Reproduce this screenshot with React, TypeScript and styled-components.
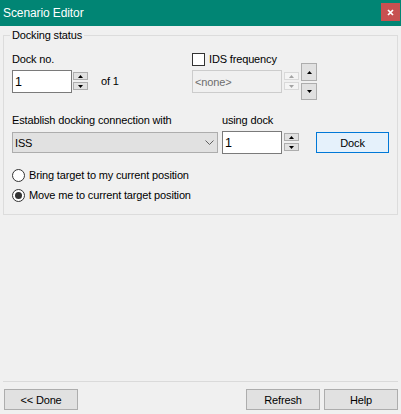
import React from "react";
import styled, { createGlobalStyle } from "styled-components";

const GlobalStyle = createGlobalStyle`
  html, body {
    margin: 0;
    padding: 0;
    background: #f0f0f0;
  }
  body {
    font-family: "Liberation Sans", Arial, sans-serif;
    font-size: 11px;
    letter-spacing: -0.15px;
    color: #000000;
  }
  * {
    box-sizing: border-box;
  }
`;

const Arrow = ({ down, color = "#000000" }: { down?: boolean; color?: string }) => (
  <svg width="5" height="3" viewBox="0 0 5 3">
    {down ? (
      <polygon points="0,0 5,0 2.5,3" fill={color} />
    ) : (
      <polygon points="0,3 5,3 2.5,0" fill={color} />
    )}
  </svg>
);

const Spinner = ({ disabled }: { disabled?: boolean }) => {
  const c = disabled ? "#a3a3a3" : "#000000";
  return (
    <Spin>
      <SpinButton $disabled={disabled}>
        <Arrow color={c} />
      </SpinButton>
      <SpinButton $disabled={disabled}>
        <Arrow down color={c} />
      </SpinButton>
    </Spin>
  );
};

const App = () => {
  return (
    <Window>
      <GlobalStyle />
      <TitleBar>
        <Caption>Scenario Editor</Caption>
        <CloseBox>
          <svg width="7" height="7" viewBox="0 0 7 7">
            <path d="M1 1 L6 6 M6 1 L1 6" stroke="#ffffff" strokeWidth="1.7" />
          </svg>
        </CloseBox>
      </TitleBar>

      <Body>
        <GroupBox>
          <GroupTitle>Docking status</GroupTitle>

          <Row>
            <Field $width={180}>
              <Label>Dock no.</Label>
              <Controls $gap={1}>
                <EditBox $width={60} readOnly defaultValue="1" />
                <Spinner />
                <Note>of 1</Note>
              </Controls>
            </Field>
            <Field>
              <CheckLine>
                <CheckBox />
                <span>IDS frequency</span>
              </CheckLine>
              <Controls $gap={2}>
                <EditBox $width={90} $disabled readOnly defaultValue="<none>" />
                <Spinner disabled />
              </Controls>
            </Field>
            <BigSpin>
              <BigSpinButton $height={18}>
                <Arrow />
              </BigSpinButton>
              <BigSpinButton $height={17}>
                <Arrow down />
              </BigSpinButton>
            </BigSpin>
          </Row>

          <Row $top={13}>
            <Field $width={210}>
              <Label>Establish docking connection with</Label>
              <Combo>
                <span>ISS</span>
                <svg width="9" height="5" viewBox="0 0 9 5">
                  <path d="M0.5 0.5 L4.5 4.5 L8.5 0.5" stroke="#606060" fill="none" strokeWidth="1" />
                </svg>
              </Combo>
            </Field>
            <Field>
              <Label>using dock</Label>
              <Controls $gap={2}>
                <EditBox $width={60} readOnly defaultValue="1" />
                <Spinner />
              </Controls>
            </Field>
            <DockButton>Dock</DockButton>
          </Row>

          <Radios>
            <RadioLine>
              <Radio />
              <span>Bring target to my current position</span>
            </RadioLine>
            <RadioLine>
              <Radio $checked />
              <span>Move me to current target position</span>
            </RadioLine>
          </Radios>
        </GroupBox>
      </Body>

      <Footer>
        <Separator />
        <ButtonBar>
          <PushButton>&lt;&lt; Done</PushButton>
          <Spacer />
          <PushButton>Refresh</PushButton>
          <PushButton>Help</PushButton>
        </ButtonBar>
      </Footer>
    </Window>
  );
};

export default App;

const Window = styled.div`
  width: 401px;
  height: 414px;
  display: flex;
  flex-direction: column;
  background: #f0f0f0;
  overflow: hidden;
`;

const TitleBar = styled.div`
  height: 26px;
  flex-shrink: 0;
  background: #018574;
  color: #ffffff;
  display: flex;
  justify-content: space-between;
  align-items: flex-start;
  padding-left: 3px;
`;

const Caption = styled.div`
  font-size: 12px;
  line-height: 26px;
  letter-spacing: -0.1px;
`;

const CloseBox = styled.div`
  width: 19px;
  height: 18px;
  margin-top: 3px;
  margin-right: 1px;
  background: #c75050;
  display: flex;
  align-items: center;
  justify-content: center;
`;

const Body = styled.div`
  padding: 2px 3px 0 3px;
`;

const GroupBox = styled.fieldset`
  margin: 0;
  min-width: 0;
  border: 1px solid #dcdcdc;
  padding: 10px 8px 9px 8px;
`;

const GroupTitle = styled.legend`
  padding: 0 2px;
  margin-left: -2px;
  line-height: 14px;
  font-size: 11px;
`;

const Row = styled.div<{ $top?: number }>`
  display: flex;
  align-items: flex-start;
  margin-top: ${(p) => p.$top ?? 0}px;
`;

const Field = styled.div<{ $width?: number }>`
  display: flex;
  flex-direction: column;
  gap: 4px;
  width: ${(p) => (p.$width ? `${p.$width}px` : "auto")};
  flex-shrink: 0;
`;

const Label = styled.div`
  line-height: 14px;
  white-space: nowrap;
`;

const Controls = styled.div<{ $gap: number }>`
  display: flex;
  align-items: flex-start;
  gap: ${(p) => p.$gap}px;
`;

const EditBox = styled.input<{ $width: number; $disabled?: boolean }>`
  width: ${(p) => p.$width}px;
  height: 23px;
  margin: 0;
  padding: 0 2px;
  border: 1px solid ${(p) => (p.$disabled ? "#cccccc" : "#7a7a7a")};
  background: ${(p) => (p.$disabled ? "#f0f0f0" : "#ffffff")};
  color: ${(p) => (p.$disabled ? "#6d6d6d" : "#000000")};
  font-family: "Liberation Sans", Arial, sans-serif;
  font-size: ${(p) => (p.$disabled ? "11px" : "12.5px")};
  letter-spacing: -0.15px;
  outline: none;
`;

const Spin = styled.div`
  display: flex;
  flex-direction: column;
  gap: 2px;
  padding-top: 2px;
`;

const SpinButton = styled.div<{ $disabled?: boolean }>`
  width: 15px;
  height: 8px;
  background: ${(p) => (p.$disabled ? "#f4f4f4" : "#e1e1e1")};
  border: 1px solid ${(p) => (p.$disabled ? "#d9d9d9" : "#adadad")};
  display: flex;
  align-items: center;
  justify-content: center;

  svg {
    display: block;
  }
`;

const Note = styled.span`
  margin-left: 12px;
  line-height: 23px;
`;

const CheckLine = styled.label`
  display: flex;
  align-items: center;
  gap: 4px;
  height: 14px;
  white-space: nowrap;
`;

const CheckBox = styled.span`
  width: 13px;
  height: 13px;
  border: 1px solid #333333;
  background: #ffffff;
  flex-shrink: 0;
`;

const BigSpin = styled.div`
  display: flex;
  flex-direction: column;
  gap: 2px;
  margin-top: 11px;
  margin-left: 2px;
`;

const BigSpinButton = styled.div<{ $height: number }>`
  width: 16px;
  height: ${(p) => p.$height}px;
  background: #e1e1e1;
  border: 1px solid #adadad;
  display: flex;
  align-items: center;
  justify-content: center;

  svg {
    display: block;
  }
`;

const Combo = styled.div`
  width: 206px;
  height: 21px;
  margin-top: 1px;
  background: #e1e1e1;
  border: 1px solid #adadad;
  display: flex;
  align-items: center;
  justify-content: space-between;
  padding: 0 3px 0 2px;

  svg {
    display: block;
  }
`;

const DockButton = styled.button`
  width: 74px;
  height: 21px;
  margin: 19px 0 0 17px;
  padding: 0;
  background: #e5f1fb;
  border: 1px solid #0078d7;
  font-family: "Liberation Sans", Arial, sans-serif;
  font-size: 11px;
  letter-spacing: -0.15px;
  color: #000000;
`;

const Radios = styled.div`
  margin-top: 11px;
  display: flex;
  flex-direction: column;
`;

const RadioLine = styled.label`
  height: 20px;
  display: flex;
  align-items: center;
  gap: 4px;
  white-space: nowrap;
`;

const Radio = styled.span<{ $checked?: boolean }>`
  width: 13px;
  height: 13px;
  border-radius: 50%;
  border: 1px solid #333333;
  background: #ffffff;
  flex-shrink: 0;
  display: flex;
  align-items: center;
  justify-content: center;

  &::after {
    content: "";
    display: ${(p) => (p.$checked ? "block" : "none")};
    width: 7px;
    height: 7px;
    border-radius: 50%;
    background: #333333;
  }
`;

const Footer = styled.div`
  margin-top: auto;
`;

const Separator = styled.div`
  height: 1px;
  margin: 0 3px;
  background: #dadada;
`;

const ButtonBar = styled.div`
  display: flex;
  gap: 4px;
  padding: 7px 3px 4px 4px;
`;

const Spacer = styled.div`
  flex: 1;
`;

const PushButton = styled.button`
  width: 74px;
  height: 21px;
  margin: 0;
  padding: 0;
  background: #e1e1e1;
  border: 1px solid #adadad;
  font-family: "Liberation Sans", Arial, sans-serif;
  font-size: 11px;
  letter-spacing: -0.15px;
  color: #000000;
`;
